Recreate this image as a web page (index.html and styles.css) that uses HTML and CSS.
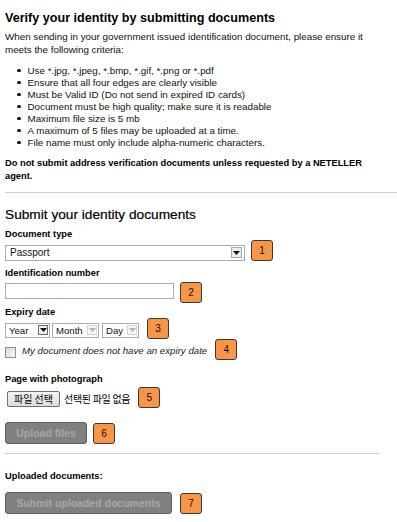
FILE: index.html
```html
<!DOCTYPE html>
<html>

<head>
	<meta name="viewport" content="width=device-width, initial-scale=1" />
	<title>Verify your identity</title>
	<link rel="stylesheet" href="styles.css">
</head>

<body>
	<div class="page">
		<h1 class="title">Verify your identity by submitting documents</h1>
		<div class="intro">
			<p class="lead">When sending in your government issued identification document, please ensure it meets the following criteria:</p>
			<ul class="rules">
				<li>Use *.jpg, *.jpeg, *.bmp, *.gif, *.png or *.pdf</li>
				<li>Ensure that all four edges are clearly visible</li>
				<li>Must be Valid ID (Do not send in expired ID cards)</li>
				<li>Document must be high quality; make sure it is readable</li>
				<li>Maximum file size is 5 mb</li>
				<li>A maximum of 5 files may be uploaded at a time.</li>
				<li>File name must only include alpha-numeric characters.</li>
			</ul>
			<p class="warning">Do not submit address verification documents unless requested by a NETELLER agent.</p>
		</div>

		<hr class="divider">

		<h2 class="subtitle">Submit your identity documents</h2>

		<form class="upload-form" onsubmit="return false">
			<div class="label l-doc">Document type</div>
			<div class="row r-doc">
				<div class="select s-doc">
					<span class="select-text">Passport</span>
					<span class="arrow"><svg width="7" height="4" viewBox="0 0 7 4"><path d="M0 0h7L3.5 4z" fill="#111"/></svg></span>
				</div>
				<span class="badge b-doc">1</span>
			</div>

			<div class="label l-id">Identification number</div>
			<div class="row r-id">
				<input class="text-input" type="text" name="id_number">
				<span class="badge b-id">2</span>
			</div>

			<div class="label l-exp">Expiry date</div>
			<div class="row r-exp">
				<div class="select s-date s-year">
					<span class="select-text">Year</span>
					<span class="arrow arrow-dark"><svg width="7" height="4" viewBox="0 0 7 4"><path d="M0 0h7L3.5 4z" fill="#111"/></svg></span>
				</div>
				<div class="select s-date s-month">
					<span class="select-text">Month</span>
					<span class="arrow arrow-off"><svg width="7" height="4" viewBox="0 0 7 4"><path d="M0 0h7L3.5 4z" fill="#b4b4b4"/></svg></span>
				</div>
				<div class="select s-date s-day">
					<span class="select-text">Day</span>
					<span class="arrow arrow-off"><svg width="7" height="4" viewBox="0 0 7 4"><path d="M0 0h7L3.5 4z" fill="#b4b4b4"/></svg></span>
				</div>
				<span class="badge b-exp">3</span>
			</div>

			<div class="row r-check">
				<span class="checkbox"></span>
				<span class="check-label">My document does not have an expiry date</span>
				<span class="badge b-check">4</span>
			</div>

			<div class="label l-photo">Page with photograph</div>
			<div class="row r-file">
				<span class="file-btn">파일 선택</span>
				<span class="file-name">선택된 파일 없음</span>
				<span class="badge b-file">5</span>
			</div>

			<div class="row r-upload">
				<button class="btn-off btn-upload" type="button" disabled>Upload files</button>
				<span class="badge b-upload">6</span>
			</div>

			<hr class="divider short">

			<div class="label l-done">Uploaded documents:</div>
			<div class="row r-submit">
				<button class="btn-off btn-submit" type="button" disabled>Submit uploaded documents</button>
				<span class="badge b-submit">7</span>
			</div>
		</form>
	</div>
</body>

</html>
```

FILE: styles.css
```css
body {
	margin:0;
	background:#fff;
	color:#111;
	font-family:"Liberation Sans", Arial, sans-serif;
}

.page {
	padding-left:5px;
}

.title {
	margin:10px 0 0;
	font-size:12.6px;
	line-height:16px;
	font-weight:bold;
	color:#000;
}

.intro {
	width:380px;
}

.lead {
	margin:5px 0 0;
	font-size:9.8px;
	line-height:12.5px;
}

.rules {
	margin:8.5px 0 0;
	padding:0;
	list-style:none;
	font-size:9.8px;
	line-height:12px;
}

.rules li {
	display:flex;
	align-items:center;
}

.rules li::before {
	content:"";
	flex:none;
	width:3.5px;
	height:3.5px;
	border-radius:50%;
	background:#111;
	margin:0 7px 0 12px;
}

.warning {
	margin:8.3px 0 0;
	font-size:9.3px;
	line-height:13px;
	font-weight:bold;
	color:#000;
}

.divider {
	border:0;
	border-top:1px solid #d0d0d0;
	height:0;
	margin:9.2px 0 0;
}

.divider.short {
	width:375px;
	margin-top:9px;
}

.subtitle {
	margin:14.5px 0 0;
	font-size:13.7px;
	line-height:16px;
	font-weight:normal;
	color:#000;
	-webkit-text-stroke:0.2px #000;
}

.upload-form {
	margin:0;
}

.label {
	font-size:9.3px;
	line-height:12px;
	font-weight:bold;
	color:#000;
}

.l-doc { margin-top:5px; }
.l-id { margin-top:6px; }
.l-exp { margin-top:3px; }
.l-photo { margin-top:13px; }
.l-done { margin-top:16px; }

.row {
	display:flex;
	align-items:flex-start;
}

.r-doc { margin-top:-0.5px; }
.r-id { margin-top:3px; }
.r-file { margin-top:2px; }
.r-upload { margin-top:14px; }
.r-submit { margin-top:10px; }

.badge {
	flex:none;
	box-sizing:border-box;
	width:22px;
	height:21px;
	border:1px solid #3a3a3a;
	border-radius:3px;
	background:#f79646;
	color:#111;
	font-size:10px;
	line-height:19px;
	text-align:center;
}

.b-doc { margin-left:6px; }
.b-id { margin-left:6px; }
.b-exp { margin-left:8px; }
.b-check { margin-left:8px; }
.b-file { margin-left:8px; }
.b-upload { margin-left:6px; margin-top:1px; }
.b-submit { margin-left:8px; margin-top:1px; }

.select {
	display:flex;
	align-items:center;
	box-sizing:border-box;
	height:16px;
	margin-top:5px;
	border:1px solid #a5acb2;
	background:#fff;
	font-size:10px;
}

.s-doc { width:240px; }

.s-date {
	height:15px;
	font-size:9.6px;
}

.s-year { width:45px; }
.s-month { width:47px; margin-left:2px; }
.s-day { width:37px; margin-left:3px; }

.select-text {
	flex:1;
	padding-left:4px;
	white-space:nowrap;
	overflow:hidden;
}

.s-date .select-text {
	padding-left:3px;
}

.arrow {
	flex:none;
	display:flex;
	align-items:center;
	justify-content:center;
	box-sizing:border-box;
	width:11px;
	height:11px;
	margin-right:2px;
	border:1px solid #a9a9a9;
	background:#ececec;
}

.s-date .arrow {
	width:10px;
	height:10px;
	margin-right:1px;
}

.arrow-dark {
	border-color:#6a6a6a;
	background:#f0f0f0;
}

.arrow-off {
	border-color:#d6d6d6;
	background:#f4f4f4;
}

.text-input {
	box-sizing:border-box;
	width:169px;
	height:16px;
	margin:1px 0 0;
	padding:0 3px;
	border:1px solid #a5acb2;
	background:#fff;
	font-size:10px;
}

.checkbox {
	flex:none;
	box-sizing:border-box;
	width:11px;
	height:11px;
	margin-top:8px;
	border:1px solid #8f8f8f;
	background:linear-gradient(135deg, #d8d8d8, #fbfbfb);
}

.check-label {
	margin:6px 0 0 6px;
	font-size:9.7px;
	line-height:12px;
	font-style:italic;
	color:#1a1a2a;
	white-space:nowrap;
}

.file-btn {
	flex:none;
	box-sizing:border-box;
	width:53px;
	height:16px;
	margin:4px 0 0 2px;
	border:1px solid #707070;
	border-radius:2px;
	background:linear-gradient(#f4f4f4, #dcdcdc);
	font-family:"Noto Sans CJK KR", sans-serif;
	font-size:10px;
	line-height:14px;
	text-align:center;
	color:#000;
}

.file-name {
	margin:4px 0 0 4px;
	font-family:"Noto Sans CJK KR", sans-serif;
	font-size:10px;
	line-height:16px;
	letter-spacing:-0.3px;
	color:#000;
	white-space:nowrap;
}

.btn-off {
	flex:none;
	box-sizing:border-box;
	height:22px;
	margin:0;
	padding:0;
	border:1px solid #5e5e5e;
	border-radius:3px;
	background:#808080;
	color:#a8a8a8;
	font-family:"Liberation Sans", Arial, sans-serif;
	font-size:10.5px;
	font-weight:bold;
	text-align:center;
}

.btn-upload { width:82px; }
.btn-submit { width:167px; }
```
